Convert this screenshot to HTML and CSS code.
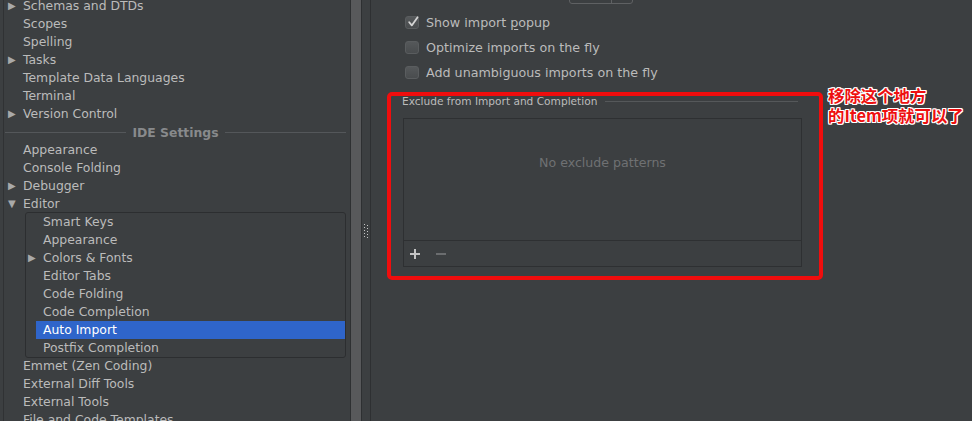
FILE: index.html
```html
<!DOCTYPE html>
<html>
<head>
<meta charset="utf-8">
<link rel="stylesheet" href="styles.css">
</head>
<body>
<div class="window">
  <div class="left">
    <div class="tree">
      <div class="row"><span class="tog">&#9654;</span><span class="lbl">Schemas and DTDs</span></div>
      <div class="row"><span class="tog"></span><span class="lbl">Scopes</span></div>
      <div class="row"><span class="tog"></span><span class="lbl">Spelling</span></div>
      <div class="row"><span class="tog">&#9654;</span><span class="lbl">Tasks</span></div>
      <div class="row"><span class="tog"></span><span class="lbl">Template Data Languages</span></div>
      <div class="row"><span class="tog"></span><span class="lbl">Terminal</span></div>
      <div class="row"><span class="tog">&#9654;</span><span class="lbl">Version Control</span></div>
      <div class="section"><span class="sline"></span><span class="stext">IDE Settings</span><span class="sline"></span></div>
      <div class="row"><span class="tog"></span><span class="lbl">Appearance</span></div>
      <div class="row"><span class="tog"></span><span class="lbl">Console Folding</span></div>
      <div class="row"><span class="tog">&#9654;</span><span class="lbl">Debugger</span></div>
      <div class="row"><span class="tog down">&#9660;</span><span class="lbl">Editor</span></div>
      <div class="subbox">
        <div class="srow"><span class="stog"></span><span class="slbl">Smart Keys</span></div>
        <div class="srow"><span class="stog"></span><span class="slbl">Appearance</span></div>
        <div class="srow"><span class="stog">&#9654;</span><span class="slbl">Colors &amp; Fonts</span></div>
        <div class="srow"><span class="stog"></span><span class="slbl">Editor Tabs</span></div>
        <div class="srow"><span class="stog"></span><span class="slbl">Code Folding</span></div>
        <div class="srow"><span class="stog"></span><span class="slbl">Code Completion</span></div>
        <div class="srow"><span class="stog"></span><span class="slbl selected">Auto Import</span></div>
        <div class="srow"><span class="stog"></span><span class="slbl">Postfix Completion</span></div>
      </div>
      <div class="row"><span class="tog"></span><span class="lbl">Emmet (Zen Coding)</span></div>
      <div class="row"><span class="tog"></span><span class="lbl">External Diff Tools</span></div>
      <div class="row"><span class="tog"></span><span class="lbl">External Tools</span></div>
      <div class="row"><span class="tog"></span><span class="lbl">File and Code Templates</span></div>
    </div>
    <div class="scroll"></div>
  </div>
  <div class="splitter">
    <svg class="grip" width="5" height="15" viewBox="0 0 5 15">
      <g fill="#c8c8c8">
        <rect x="0" y="0" width="1" height="1"/><rect x="3" y="1" width="1" height="1"/>
        <rect x="0" y="3" width="1" height="1"/><rect x="3" y="4" width="1" height="1"/>
        <rect x="0" y="6" width="1" height="1"/><rect x="3" y="7" width="1" height="1"/>
        <rect x="0" y="9" width="1" height="1"/><rect x="3" y="10" width="1" height="1"/>
        <rect x="0" y="12" width="1" height="1"/><rect x="3" y="13" width="1" height="1"/>
      </g>
    </svg>
  </div>
  <div class="right">
    <div class="cutrow">
      <span class="cuttext">Insert imports on paste:</span>
      <span class="combo"><span class="combo-val"></span><span class="combo-btn"></span></span>
    </div>
    <div class="check-row">
      <span class="cb checked">
        <svg width="14" height="14" viewBox="0 0 14 14"><path d="M3.2 7.2 L5.8 10.4 L11.6 2.2" fill="none" stroke="#d4d4d4" stroke-width="1.8" stroke-linecap="round" stroke-linejoin="round"/></svg>
      </span>
      <span class="cb-label">Show import <u>p</u>opup</span>
    </div>
    <div class="check-row">
      <span class="cb"></span>
      <span class="cb-label">Optimize imports on the fly</span>
    </div>
    <div class="check-row">
      <span class="cb"></span>
      <span class="cb-label">Add unambiguous imports on the fly</span>
    </div>
    <div class="group-title"><span class="gt-text">Exclude from Import and Completion</span><span class="gt-line"></span></div>
    <div class="list">
      <div class="list-body"><span class="empty">No exclude patterns</span></div>
      <div class="list-tools">
        <svg width="12" height="12" viewBox="0 0 12 12"><path d="M6 1 V11 M1 6 H11" stroke="#c4c4c4" stroke-width="2"/></svg>
        <svg width="12" height="12" viewBox="0 0 12 12"><path d="M1 6 H11" stroke="#6b6d6f" stroke-width="2"/></svg>
      </div>
    </div>
  </div>
</div>
<div class="highlight-box"></div>
<div class="note">移除这个地方<br>的Item项就可以了</div>
</body>
</html>
```
FILE: styles.css
```css
html, body {
  margin: 0;
  padding: 0;
}
body {
  width: 972px;
  height: 421px;
  overflow: hidden;
  background: #3c3f41;
  color: #bbbbbb;
  font-family: "DejaVu Sans", "Noto Sans CJK SC", sans-serif;
  font-size: 12.4px;
  position: relative;
}
.window {
  display: flex;
  height: 421px;
}
.left {
  display: flex;
  width: 362px;
  flex: none;
}
.tree {
  margin-left: 3px;
  width: 348px;
  box-sizing: border-box;
  border-left: 1px solid #303234;
  border-right: 1px solid #2e3032;
  margin-top: -3px;
  overflow: hidden;
}
.row {
  display: flex;
  height: 18px;
  line-height: 18px;
  white-space: nowrap;
}
.tog {
  width: 19px;
  flex: none;
  padding-left: 4px;
  font-size: 10px;
  color: #a9a9a9;
  box-sizing: border-box;
}
.tog.down {
  font-size: 10px;
}
.section {
  display: flex;
  align-items: center;
  height: 18px;
  gap: 6px;
  padding: 0 4px 0 1px;
}
.sline {
  flex: 1;
  height: 1px;
  background: #54575a;
}
.stext {
  color: #888a8c;
  font-weight: bold;
}
.subbox {
  margin: -1px 4px -1px 21px;
  border: 1px solid #2c2e30;
  border-radius: 3px;
}
.srow {
  display: flex;
  height: 18px;
  line-height: 18px;
  white-space: nowrap;
}
.stog {
  width: 10px;
  flex: none;
  padding-left: 2px;
  font-size: 10px;
  color: #a9a9a9;
  box-sizing: border-box;
}
.slbl {
  flex: 1;
  padding-left: 7px;
}
.slbl.selected {
  background: #2f65ca;
  color: #ffffff;
}
.scroll {
  width: 10px;
  background: #58595b;
  border-right: 1px solid #2e3032;
  flex: none;
}
.splitter {
  width: 9px;
  flex: none;
  border-right: 1px solid #2e3032;
  display: flex;
  justify-content: center;
  align-items: flex-start;
  padding-top: 224px;
  box-sizing: border-box;
}
.right {
  flex: 1;
  padding-left: 31px;
  font-size: 12.7px;
}
.cutrow {
  display: flex;
  align-items: flex-end;
  height: 20px;
  margin-top: -16px;
  margin-left: 4px;
}
.cuttext {
  line-height: 18px;
  width: 163px;
  position: relative;
  top: -6px;
}
.combo {
  display: flex;
  height: 19px;
  border: 1px solid #5f6163;
  border-radius: 3px;
}
.combo-val {
  width: 41px;
  border-right: 1px solid #5f6163;
}
.combo-btn {
  width: 20px;
}
.check-row {
  display: flex;
  align-items: center;
  height: 25px;
  margin-top: 6px;
  margin-bottom: -6px;
  padding-left: 3px;
}
.check-row + .check-row {
  margin-top: 6px;
}
.cb {
  width: 14px;
  height: 13px;
  box-sizing: border-box;
  border: 1px solid #5a5d5f;
  border-radius: 3px;
  background: linear-gradient(#55585a, #494c4e);
  margin-right: 7px;
  display: flex;
  align-items: center;
  justify-content: center;
  position: relative;
}
.cb svg {
  position: absolute;
  left: 0;
  top: -2px;
}
.cb-label u {
  text-decoration: underline;
  text-underline-offset: 2px;
}
.group-title {
  display: flex;
  align-items: center;
  height: 14px;
  margin-top: 15px;
  font-size: 10.6px;
  width: 396px;
}
.gt-text {
  color: #bbbbbb;
  white-space: nowrap;
  margin-right: 8px;
}
.gt-line {
  flex: 1;
  height: 1px;
  background: #55585a;
}
.list {
  margin-top: 10px;
  margin-left: 1px;
  width: 399px;
  height: 149px;
  box-sizing: border-box;
  border: 1px solid #2e3032;
  display: flex;
  flex-direction: column;
}
.list-body {
  flex: 1;
  border-bottom: 1px solid #2e3032;
  display: flex;
  justify-content: center;
  padding-top: 36px;
  box-sizing: border-box;
}
.empty {
  color: #6f7173;
  font-size: 12.6px;
  line-height: 16px;
  height: 16px;
}
.list-tools {
  height: 25px;
  display: flex;
  align-items: center;
  gap: 14px;
  padding-left: 5px;
}
.highlight-box {
  position: absolute;
  left: 387px;
  top: 92px;
  width: 436px;
  height: 188px;
  box-sizing: border-box;
  border: 4px solid #f00d0d;
  border-radius: 5px;
}
.note {
  position: absolute;
  left: 828px;
  top: 85px;
  font-family: "Noto Sans CJK SC", sans-serif;
  font-weight: bold;
  font-size: 16.4px;
  line-height: 20px;
  color: #ee1010;
  text-shadow: 1px 0 0 #fff, -1px 0 0 #fff, 0 1px 0 #fff, 0 -1px 0 #fff, 1px 1px 0 #fff, -1px -1px 0 #fff, 1px -1px 0 #fff, -1px 1px 0 #fff;
  letter-spacing: 0;
}
```
